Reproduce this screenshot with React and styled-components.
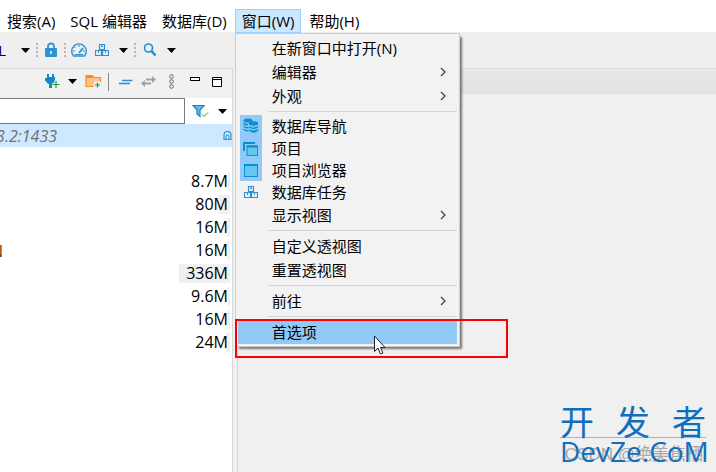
import React from 'react';
import styled, { createGlobalStyle } from 'styled-components';

const GlobalStyle = createGlobalStyle`
  * {
    box-sizing: border-box;
  }
  body {
    margin: 0;
    background: #f0f0f0;
    color: #000;
    font-family: 'Open Sans', 'Noto Sans', 'Noto Sans CJK SC', sans-serif;
    font-size: 15px;
    line-height: 22px;
    overflow: hidden;
  }
  button,
  input {
    font: inherit;
    color: inherit;
  }
`;

const Window = styled.div`
  position: relative;
  display: flex;
  flex-direction: column;
  min-height: 100vh;
  overflow: hidden;
`;

const MenuBar = styled.nav`
  display: flex;
  gap: 1px;
  height: 32px;
  padding-top: 9px;
  background: #fff;
`;

const MenuSlot = styled.div`
  position: relative;
  flex: none;
`;

const MenuTitle = styled.button`
  height: 24px;
  padding: 0 6px;
  border: 1px solid ${(p) => (p.$open ? '#99d1ff' : 'transparent')};
  background: ${(p) => (p.$open ? '#cce8ff' : 'transparent')};
  white-space: nowrap;
`;

const Dropdown = styled.div`
  position: absolute;
  z-index: 2;
  top: 24px;
  left: 0;
  display: flex;
  flex-direction: column;
  width: 225px;
  padding: 2px;
  border: 1px solid #ccc;
  background: #f2f2f2;
  box-shadow: 3px 3px 2px -1px #777;
`;

const MenuItem = styled.button`
  display: flex;
  align-items: center;
  height: ${(p) => (p.$compact ? 22 : 24)}px;
  padding: 0 10px 0 0;
  border: none;
  background: ${(p) => (p.$active ? '#91c9f7' : 'transparent')};
  text-align: left;

  span {
    flex: 1;
  }
`;

const ItemIcon = styled.i`
  display: flex;
  align-items: center;
  justify-content: center;
  align-self: stretch;
  width: 22px;
  margin: 0 10px 0 2px;
  background: ${(p) => (p.$checked ? '#91c9f7' : 'transparent')};
`;

const Separator = styled.hr`
  width: calc(100% - 30px);
  height: 1px;
  margin: 3px 0 3px 30px;
  border: none;
  background: #d4d4d4;
`;

const ToolBar = styled.div`
  display: flex;
  align-items: center;
  height: 36px;
  background: #efefef;
`;

const ToolButton = styled.button`
  display: flex;
  align-items: center;
  justify-content: center;
  flex: none;
  width: ${(p) => p.$width || 24}px;
  height: 22px;
  padding: 0;
  border: none;
  background: transparent;
`;

const LanguageLabel = styled.span`
  display: flex;
  justify-content: flex-end;
  width: 6px;
  margin-right: 10px;
  overflow: hidden;
  color: #000060;
`;

const Grip = styled.i`
  width: 2px;
  height: 14px;
  margin: 0 2px;
  background: repeating-linear-gradient(#bdb5ad 0 2px, transparent 2px 4px);
`;

const Main = styled.div`
  display: flex;
  flex: 1;
  gap: 4px;
`;

const Navigator = styled.section`
  display: flex;
  flex-direction: column;
  width: 233px;
  border-top: 1px solid #d8d8d8;
  border-right: 1px solid #d8d8d8;
  background: #fff;
`;

const ViewBar = styled.div`
  display: flex;
  align-items: center;
  justify-content: flex-end;
  height: 29px;
  padding: 0 3px 4px 0;
  background: #f1f1f1;
`;

const Divider = styled.i`
  width: 1px;
  height: 18px;
  margin: 0 4px;
  background: #888;
`;

const FilterRow = styled.div`
  display: flex;
  align-items: center;
  height: 26px;
  padding-right: 3px;
`;

const FilterInput = styled.input`
  flex: 1;
  min-width: 0;
  height: 26px;
  padding: 0 4px;
  border: 1px solid #7a7a7a;
  border-left: none;
  background: #fff;
  outline: none;
`;

const Connection = styled.div`
  display: flex;
  align-items: center;
  justify-content: space-between;
  height: 23px;
  background: #cde8ff;
  color: #707070;
  font-size: 16px;
  font-style: italic;
`;

const Clipped = styled.span`
  display: flex;
  justify-content: flex-end;
  width: ${(p) => p.$width}px;
  overflow: hidden;
  white-space: nowrap;
`;

const SizeTable = styled.table`
  width: 100%;
  margin-top: 23px;
  border-collapse: collapse;
  font-size: 16px;

  td {
    height: 23px;
    padding: 0;
  }
`;

const TableName = styled.td`
  color: #7a2a00;
`;

const SizeCell = styled.div`
  display: flex;
  justify-content: flex-end;
  height: 19px;
  margin-right: 2px;
  padding-right: 2px;
  background: linear-gradient(#f0f0f0, #f0f0f0) right / ${(p) => p.$bar}px 100% no-repeat;
  line-height: 19px;
`;

const Editor = styled.section`
  flex: 1;
  border-top: 1px solid #d8d8d8;
  border-left: 1px solid #d8d8d8;
  background: #f0f0f0;
`;

const EditorTabs = styled.div`
  height: 25px;
  background: linear-gradient(#e8e8e8, #e2e2e2);
`;

const Highlight = styled.div`
  position: absolute;
  z-index: 3;
  top: 319px;
  left: 235px;
  width: 273px;
  height: 39px;
  border: 2px solid #f00;
`;

const Pointer = styled.svg`
  position: absolute;
  z-index: 4;
  top: 335px;
  left: 373px;
`;

const Watermark = styled.div`
  position: absolute;
  right: 10px;
  bottom: 8px;
  width: 146px;
  color: #106ebe;
`;

const WatermarkTop = styled.div`
  display: flex;
  justify-content: space-between;
  border-bottom: 1px solid #7cc4e8;
  font-family: 'Noto Sans CJK SC', sans-serif;
  font-size: 34px;
  line-height: 32px;
`;

const WatermarkName = styled.div`
  position: relative;
  z-index: 0;
  font-family: 'Open Sans', sans-serif;
  font-size: 28px;
  line-height: 26px;
`;

const WatermarkAuthor = styled.div`
  position: absolute;
  z-index: -1;
  right: 3px;
  bottom: 0;
  color: #a8a8a8;
  font-family: 'Liberation Sans', 'Noto Sans CJK SC', sans-serif;
  font-size: 17px;
  line-height: 18px;
  white-space: nowrap;
`;

const Caret = () => (
  <svg width="9" height="5" viewBox="0 0 9 5">
    <path d="M0 0h9L4.500 5z" fill="#000" />
  </svg>
);

const Chevron = () => (
  <svg width="7" height="12" viewBox="0 0 7 12">
    <path d="M1 2l4 4-4 4" fill="none" stroke="#444" strokeWidth="1.300" />
  </svg>
);

const LockIcon = () => (
  <svg width="14" height="16" viewBox="0 0 14 16">
    <path d="M4 8V4.500a3 3 0 0 1 6 0V8" fill="none" stroke="#3a93d0" strokeWidth="1.800" />
    <rect x="1" y="6" width="12" height="9" rx="1" fill="#2f8fd0" />
    <path d="M7 9v3" stroke="#fff" strokeWidth="1.500" />
  </svg>
);

const GaugeIcon = () => (
  <svg width="18" height="16" viewBox="0 0 18 16" fill="none" stroke="#2f8fd0">
    <path d="M3.500 14A7.300 7.300 0 1 1 14.500 14z" strokeWidth="1.400" />
    <path d="M9 11l4-5" strokeWidth="2" />
    <path d="M9 3v2M4.500 5l1 1M3 9h2M13 9h2M5 12.500h8" />
  </svg>
);

const BoxesIcon = () => (
  <svg width="14" height="13" viewBox="0 0 14 13" fill="none" stroke="#2f8fd0">
    <path d="M4.500 .5h5v5h-5zM.5 6.500h6v5h-6zM7.500 6.500h6v5h-6z" strokeWidth="1.200" />
    <path d="M6 2.500h2M3.500 7v2M10.500 7v2M7 1v2" />
  </svg>
);

const SearchIcon = () => (
  <svg width="14" height="14" viewBox="0 0 14 14" fill="none" stroke="#1590d0">
    <circle cx="5.500" cy="5" r="4" strokeWidth="1.600" />
    <path d="M8.500 8l4 4.500" strokeWidth="2.400" />
  </svg>
);

const PlugIcon = () => (
  <svg width="15" height="15" viewBox="0 0 15 15">
    <path d="M2 0h2v3h3V0h2v3h1v3L9 9 7 10v4H4v-4L2 9 1 7H0V4h2z" fill="#1088cc" />
    <path d="M11 7v7M7.500 10.500h7" stroke="#f1f1f1" strokeWidth="3" />
    <path d="M11 7v7M7.500 10.500h7" stroke="#17a03a" strokeWidth="1.200" />
  </svg>
);

const FolderIcon = () => (
  <svg width="17" height="15" viewBox="0 0 17 15">
    <path d="M1 12.500V1.500h6l2 2h6.500v9z" fill="#ffc28a" stroke="#ff8a1c" strokeWidth="1.200" />
    <path d="M1 3h7" stroke="#ff8a1c" strokeWidth="2" />
    <circle cx="12.500" cy="11" r="4" fill="#f1f1f1" />
    <path d="M12.500 8.500v5M10 11h5" stroke="#17a03a" strokeWidth="1.200" />
  </svg>
);

const CollapseIcon = () => (
  <svg width="14" height="6" viewBox="0 0 14 6">
    <path d="M3 1.500h10.500M0 4.500h11" stroke="#2f8fd0" strokeWidth="1.600" />
  </svg>
);

const LinkIcon = () => (
  <svg width="15" height="11" viewBox="0 0 15 11">
    <path d="M5 2.500h6V0l4 3.500L11 7V4.500H5zM10 6.500H4V4L0 7.500 4 11V8.500h6z" fill="#a0a0a0" />
  </svg>
);

const DotsIcon = () => (
  <svg width="5" height="15" viewBox="0 0 5 15" fill="none" stroke="#666">
    <circle cx="2.500" cy="2.500" r="1.800" />
    <circle cx="2.500" cy="7.500" r="1.800" />
    <circle cx="2.500" cy="12.500" r="1.800" />
  </svg>
);

const MinimizeIcon = () => (
  <svg width="10" height="11" viewBox="0 0 10 11">
    <rect x=".5" y="1.500" width="9" height="3" fill="#fff" stroke="#000" />
  </svg>
);

const MaximizeIcon = () => (
  <svg width="10" height="10" viewBox="0 0 10 10">
    <path d="M.5 .5h9v9h-9zM0 2.500h10" fill="#fff" stroke="#000" />
  </svg>
);

const FilterIcon = () => (
  <svg width="17" height="14" viewBox="0 0 17 14">
    <path d="M1 1.500h11L8 6v6.500L5 10V6z" fill="#5cc0ea" stroke="#1088cc" strokeWidth="1.200" />
    <path d="M10 10.500l2 2 4-4" fill="none" stroke="#17a03a" />
  </svg>
);

const HomeIcon = () => (
  <svg width="9" height="9" viewBox="0 0 9 9">
    <path
      d="M1 8.500V4a3.500 3.500 0 0 1 7 0v4.500zM3 8V5.500a1.500 1.500 0 0 1 3 0V8"
      fill="none"
      stroke="#2a9bd8"
      strokeWidth="1.200"
    />
  </svg>
);

const DatabasesIcon = () => (
  <svg width="16" height="16" viewBox="0 0 16 16">
    <g fill="#0a90d0">
      <ellipse cx="5" cy="2.500" rx="4.500" ry="2" />
      <path d="M.5 4q2 2 4.500 2v1.500q-4 0-4.500-2zM.5 7q1 2 5 2v1.500q-4 0-5-2zM.5 10q1 2 5 2v1.500q-4 0-5-2z" />
      <ellipse cx="10.500" cy="5.500" rx="4.700" ry="2.200" />
      <path d="M6 8q4 3 9.300 0v1.500q-4.500 3.500-9.300 0zM6 11q4 3 9.300 0v1.500q-4.500 4.500-9.300 0z" />
    </g>
    <path d="M6 7.500q4.500 2.500 9 0M6 10.500q4.500 2.500 9 0" fill="none" stroke="#6accf0" />
  </svg>
);

const ProjectsIcon = () => (
  <svg width="15" height="15" viewBox="0 0 15 15">
    <path d="M1 10V2h11" fill="none" stroke="#0a90d0" strokeWidth="2" />
    <rect x="4" y="5" width="10.500" height="9.500" fill="#62c8ec" stroke="#0a90d0" />
    <path d="M3.500 5.500H15" stroke="#0a90d0" strokeWidth="2" />
    <path d="M2.500 11V3.500H13" fill="none" stroke="#91c9f7" />
  </svg>
);

const ExplorerIcon = () => (
  <svg width="14" height="13" viewBox="0 0 14 13">
    <rect x=".5" y=".5" width="13" height="12" fill="#62c8ec" stroke="#0a90d0" />
    <path d="M0 1h14" stroke="#0a90d0" strokeWidth="2" />
  </svg>
);

const WINDOW_MENU = [
  { label: '在新窗口中打开(N)' },
  { label: '编辑器', sub: true },
  { label: '外观', sub: true },
  null,
  { label: '数据库导航', icon: <DatabasesIcon />, checked: true },
  { label: '项目', icon: <ProjectsIcon />, checked: true },
  { label: '项目浏览器', icon: <ExplorerIcon />, checked: true },
  { label: '数据库任务', icon: <BoxesIcon /> },
  { label: '显示视图', sub: true },
  null,
  { label: '自定义透视图' },
  { label: '重置透视图' },
  null,
  { label: '前往', sub: true },
  null,
  { label: '首选项', active: true },
];

const MENUS = [
  { title: '搜索(A)' },
  { title: 'SQL 编辑器' },
  { title: '数据库(D)' },
  { title: '窗口(W)', items: WINDOW_MENU },
  { title: '帮助(H)' },
];

const TABLES = [
  { size: '8.7M', bar: 2 },
  { size: '80M', bar: 12 },
  { size: '16M', bar: 3 },
  { size: '16M', bar: 3, name: 'N' },
  { size: '336M', bar: 51 },
  { size: '9.6M', bar: 2 },
  { size: '16M', bar: 3 },
  { size: '24M', bar: 4 },
];

const DropdownMenu = ({ items }) => (
  <Dropdown role="menu">
    {items.map((item, i) =>
      item ? (
        <MenuItem key={item.label} role="menuitem" $compact={!!item.icon} $active={item.active}>
          <ItemIcon $checked={item.checked}>{item.icon}</ItemIcon>
          <span>{item.label}</span>
          {item.sub && <Chevron />}
        </MenuItem>
      ) : (
        <Separator key={i} />
      )
    )}
  </Dropdown>
);

const DatabaseNavigator = () => (
  <Navigator>
    <ViewBar>
      <ToolButton aria-label="New connection" $width={20}>
        <PlugIcon />
      </ToolButton>
      <ToolButton aria-label="Connection types" $width={20}>
        <Caret />
      </ToolButton>
      <ToolButton aria-label="New folder" $width={22}>
        <FolderIcon />
      </ToolButton>
      <Divider />
      <ToolButton aria-label="Collapse all" $width={25}>
        <CollapseIcon />
      </ToolButton>
      <ToolButton aria-label="Link with editor" $width={20}>
        <LinkIcon />
      </ToolButton>
      <ToolButton aria-label="View menu" $width={27}>
        <DotsIcon />
      </ToolButton>
      <ToolButton aria-label="Minimize" $width={20}>
        <MinimizeIcon />
      </ToolButton>
      <ToolButton aria-label="Maximize" $width={24}>
        <MaximizeIcon />
      </ToolButton>
    </ViewBar>
    <FilterRow>
      <FilterInput aria-label="Filter" />
      <ToolButton aria-label="Filter settings" $width={31}>
        <FilterIcon />
      </ToolButton>
      <ToolButton aria-label="Filter options" $width={13}>
        <Caret />
      </ToolButton>
    </FilterRow>
    <Connection>
      <Clipped $width={57}>3.2:1433</Clipped>
      <HomeIcon />
    </Connection>
    <SizeTable>
      <tbody>
        {TABLES.map((table, i) => (
          <tr key={i}>
            <TableName>
              <Clipped $width={3}>{table.name}</Clipped>
            </TableName>
            <td>
              <SizeCell $bar={table.bar}>{table.size}</SizeCell>
            </td>
          </tr>
        ))}
      </tbody>
    </SizeTable>
  </Navigator>
);

export default function App() {
  return (
    <>
      <GlobalStyle />
      <Window>
        <MenuBar>
          {MENUS.map((menu) => (
            <MenuSlot key={menu.title}>
              <MenuTitle $open={!!menu.items}>{menu.title}</MenuTitle>
              {menu.items && <DropdownMenu items={menu.items} />}
            </MenuSlot>
          ))}
        </MenuBar>
        <ToolBar>
          <LanguageLabel>SQL</LanguageLabel>
          <ToolButton aria-label="SQL options" $width={18}>
            <Caret />
          </ToolButton>
          <Grip />
          <ToolButton aria-label="Lock" $width={22}>
            <LockIcon />
          </ToolButton>
          <Grip />
          <ToolButton aria-label="Dashboard" $width={22}>
            <GaugeIcon />
          </ToolButton>
          <ToolButton aria-label="Tasks">
            <BoxesIcon />
          </ToolButton>
          <ToolButton aria-label="Task options" $width={18}>
            <Caret />
          </ToolButton>
          <Grip />
          <ToolButton aria-label="Search">
            <SearchIcon />
          </ToolButton>
          <ToolButton aria-label="Search options" $width={18}>
            <Caret />
          </ToolButton>
        </ToolBar>
        <Main>
          <DatabaseNavigator />
          <Editor>
            <EditorTabs />
          </Editor>
        </Main>
        <Highlight />
        <Pointer width="13" height="20" viewBox="0 0 13 20">
          <path
            d="M1.500 1v15.500l3.500-3.500 2.500 6 2.500-1-2.500-5.500h4.500z"
            fill="#fff"
            stroke="#1a2530"
          />
        </Pointer>
        <Watermark>
          <WatermarkTop>
            <span>开</span>
            <span>发</span>
            <span>者</span>
          </WatermarkTop>
          <WatermarkName>
            <WatermarkAuthor>CSDN @绝美焦栖</WatermarkAuthor>
            DevZe.CoM
          </WatermarkName>
        </Watermark>
      </Window>
    </>
  );
}
